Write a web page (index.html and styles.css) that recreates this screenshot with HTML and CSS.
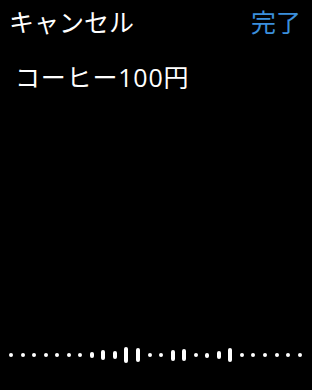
FILE: index.html
```html
<!DOCTYPE html>
<html lang="ja">
<head>
    <meta charset="UTF-8">
    <meta name="viewport" content="width=device-width, initial-scale=1.0">
    <title>音声入力</title>
    <link rel="stylesheet" href="styles.css">
</head>
<body>

    <div class="screen">
        <div class="topbar">
            <span class="cancel">キャンセル</span>
            <span class="done">完了</span>
        </div>

        <p class="dictation">コーヒー100円</p>

        <div class="wave">
            <span class="bar" style="height:4px"></span>
            <span class="bar" style="height:4px"></span>
            <span class="bar" style="height:4px"></span>
            <span class="bar" style="height:4px"></span>
            <span class="bar" style="height:4px"></span>
            <span class="bar" style="height:4px"></span>
            <span class="bar" style="height:4px"></span>
            <span class="bar" style="height:6px"></span>
            <span class="bar" style="height:10px"></span>
            <span class="bar" style="height:8px"></span>
            <span class="bar" style="height:16px"></span>
            <span class="bar" style="height:14px"></span>
            <span class="bar" style="height:4px"></span>
            <span class="bar" style="height:4px"></span>
            <span class="bar" style="height:11px"></span>
            <span class="bar" style="height:12px"></span>
            <span class="bar" style="height:4px"></span>
            <span class="bar" style="height:5px"></span>
            <span class="bar" style="height:8px"></span>
            <span class="bar" style="height:14px"></span>
            <span class="bar" style="height:4px"></span>
            <span class="bar" style="height:4px"></span>
            <span class="bar" style="height:4px"></span>
            <span class="bar" style="height:4px"></span>
            <span class="bar" style="height:4px"></span>
            <span class="bar" style="height:4px"></span>
        </div>
    </div>

</body>
</html>
```

FILE: styles.css
```css
body {
    margin: 0;
    padding: 0;
    background-color: #000;
    color: #fff;
    font-family: "Noto Sans CJK JP", "Noto Sans", sans-serif;
}

.screen {
    height: 390px;
    display: flex;
    flex-direction: column;
    overflow: hidden;
}

.topbar {
    display: flex;
    justify-content: space-between;
    padding: 3px 11px 0 9px;
    font-size: 25px;
    line-height: 36px;
}

.done {
    color: #3b8fdc;
}

.dictation {
    margin: 20px 0 0 15px;
    font-family: "Open Sans", "Noto Sans CJK JP", sans-serif;
    font-size: 25px;
    line-height: 36px;
    letter-spacing: 0.8px;
}

.wave {
    margin-top: auto;
    height: 20px;
    padding: 0 10px 25px 9px;
    display: flex;
    justify-content: space-between;
    align-items: center;
}

.bar {
    width: 4px;
    border-radius: 2px;
    background-color: #fff;
}
```
